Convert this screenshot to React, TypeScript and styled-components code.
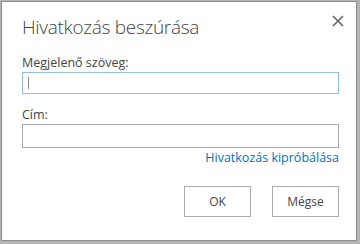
import React from "react";
import styled, { createGlobalStyle } from "styled-components";

const GlobalStyle = createGlobalStyle`
  html, body {
    margin: 0;
    padding: 0;
    background: #b4b4b4;
  }
  body {
    font-family: "Segoe UI", "Open Sans", "Liberation Sans", sans-serif;
  }
`;

const Frame = styled.div`
  width: 360px;
  height: 244px;
  box-sizing: border-box;
  padding: 1px 3px 3px 1px;
`;

const Dialog = styled.div`
  width: 100%;
  height: 100%;
  box-sizing: border-box;
  background: #fff;
  border: 1px solid #8c8c8c;
  display: flex;
  flex-direction: column;
  padding: 0 17px 0 20px;
`;

const Header = styled.div`
  display: flex;
  justify-content: space-between;
  align-items: flex-start;
  height: 52px;
`;

const Title = styled.h1`
  margin: 12px 0 0 0;
  font-size: 19px;
  font-weight: 300;
  color: #444;
  letter-spacing: -0.3px;
`;

const Close = styled.button`
  border: none;
  background: none;
  padding: 0;
  margin: 12px -6px 0 0;
  width: 14px;
  height: 14px;
  cursor: pointer;
`;

const Label = styled.label`
  display: block;
  font-size: 12.5px;
  color: #444;
  line-height: 17px;
  margin-bottom: 1px;
`;

const Field = styled.div<{ focused?: boolean }>`
  height: ${(p) => (p.focused ? 22 : 24)}px;
  box-sizing: border-box;
  border: 1px solid ${(p) => (p.focused ? "#92c0e0" : "#ababab")};
  position: relative;
  margin-bottom: ${(p) => (p.focused ? 12 : 0)}px;
`;

const Caret = styled.span`
  position: absolute;
  left: 5px;
  top: 4px;
  width: 1px;
  height: 12px;
  background: #888;
`;

const LinkRow = styled.div`
  display: flex;
  justify-content: flex-end;
  margin-top: 1px;
`;

const TestLink = styled.a`
  font-size: 12.5px;
  color: #0072c6;
  text-decoration: none;
  line-height: 17px;
`;

const Buttons = styled.div`
  display: flex;
  justify-content: flex-end;
  gap: 21px;
  margin-top: 20px;
`;

const Button = styled.button`
  width: 67px;
  height: 31px;
  box-sizing: border-box;
  border: 1px solid #ababab;
  background: #fff;
  color: #444;
  font-family: inherit;
  font-size: 12px;
  padding: 0;
`;

const App: React.FC = () => {
  return (
    <>
      <GlobalStyle />
      <Frame>
        <Dialog>
          <Header>
            <Title>Hivatkozás beszúrása</Title>
            <Close aria-label="Bezárás">
              <svg width="14" height="14" viewBox="0 0 14 14">
                <path d="M2 2 L12 12 M12 2 L2 12" stroke="#666" strokeWidth="1.6" />
              </svg>
            </Close>
          </Header>
          <Label>Megjelenő szöveg:</Label>
          <Field focused>
            <Caret />
          </Field>
          <Label>Cím:</Label>
          <Field />
          <LinkRow>
            <TestLink href="#">Hivatkozás kipróbálása</TestLink>
          </LinkRow>
          <Buttons>
            <Button>OK</Button>
            <Button>Mégse</Button>
          </Buttons>
        </Dialog>
      </Frame>
    </>
  );
};

export default App;
